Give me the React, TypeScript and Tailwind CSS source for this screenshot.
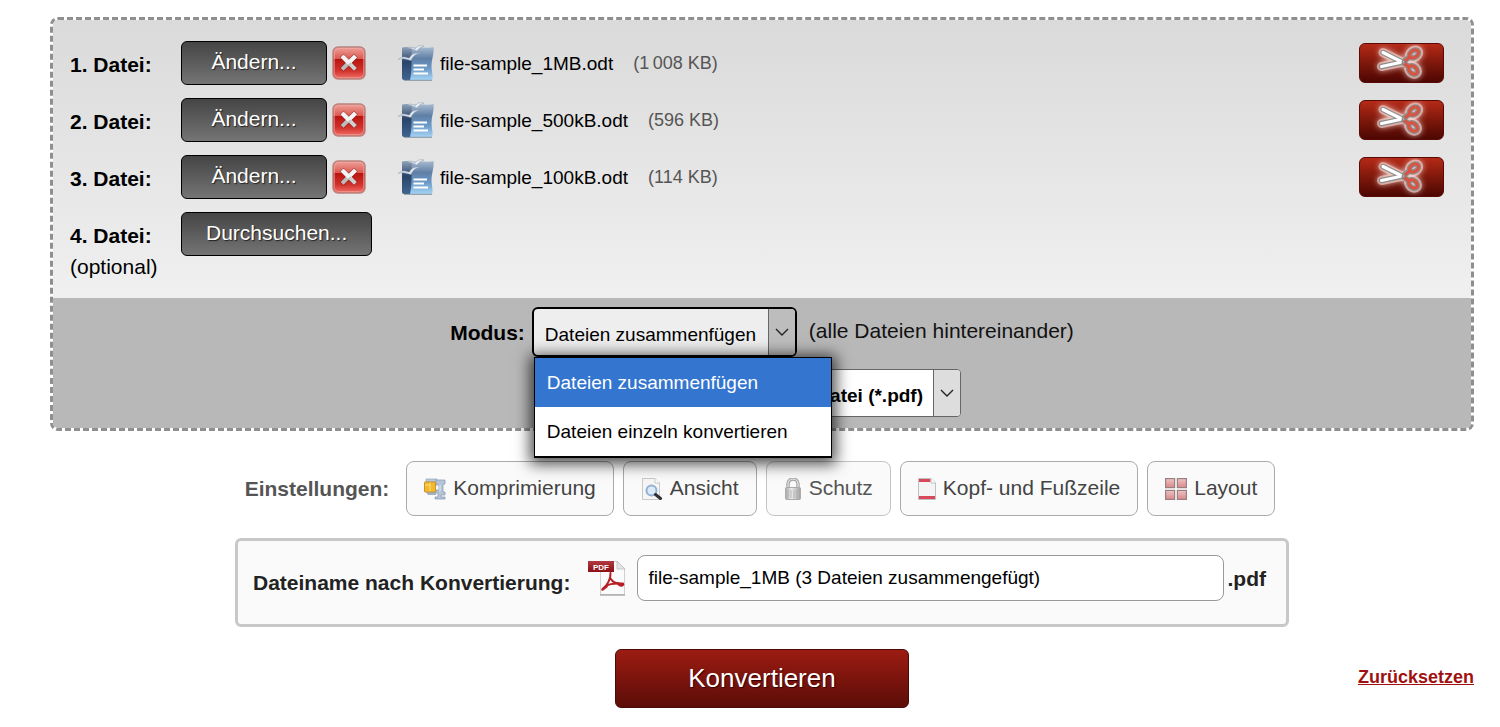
import { useState, type ReactNode } from "react";

const FILES = [
  { name: "file-sample_1MB.odt", size: "(1\u2009008 KB)" },
  { name: "file-sample_500kB.odt", size: "(596 KB)" },
  { name: "file-sample_100kB.odt", size: "(114 KB)" },
];

const MODES = ["Dateien zusammenfügen", "Dateien einzeln konvertieren"];

const SETTINGS = [
  { label: "Komprimierung", icon: <ClampIcon />, muted: false },
  { label: "Ansicht", icon: <PreviewIcon />, muted: false },
  { label: "Schutz", icon: <LockIcon />, muted: true },
  { label: "Kopf- und Fußzeile", icon: <HeaderFooterIcon />, muted: false },
  { label: "Layout", icon: <GridIcon />, muted: false },
];

/** Gradients shared by all icons on the page. */
function IconDefs() {
  return (
    <svg aria-hidden className="absolute h-0 w-0">
      <defs>
        <linearGradient id="page-blue" x1="0" y1="0" x2="0" y2="1">
          <stop offset="0" stopColor="#a9bcd2" />
          <stop offset="0.35" stopColor="#5f7fa5" />
          <stop offset="0.65" stopColor="#6c9ac8" />
          <stop offset="1" stopColor="#a5d4f5" />
        </linearGradient>
        <linearGradient id="cover-blue" x1="0" y1="0" x2="0" y2="1">
          <stop offset="0" stopColor="#8ea2ba" />
          <stop offset="0.45" stopColor="#2a4469" />
          <stop offset="1" stopColor="#3f6490" />
        </linearGradient>
        <linearGradient id="remove-red" x1="0" y1="0" x2="0" y2="1">
          <stop offset="0" stopColor="#eea39c" />
          <stop offset="0.36" stopColor="#dc5a52" />
          <stop offset="0.38" stopColor="#b8140f" />
          <stop offset="0.75" stopColor="#d3332d" />
          <stop offset="1" stopColor="#f0736c" />
        </linearGradient>
        <linearGradient id="tile" x1="0" y1="0" x2="0" y2="1">
          <stop offset="0" stopColor="#ecc4c4" />
          <stop offset="1" stopColor="#d98888" />
        </linearGradient>
        <linearGradient id="banner" x1="0" y1="0" x2="0" y2="1">
          <stop offset="0" stopColor="#b23a40" />
          <stop offset="1" stopColor="#8c0f16" />
        </linearGradient>
        <linearGradient id="steel" x1="0" y1="0" x2="1" y2="0">
          <stop offset="0" stopColor="#a8a8a8" />
          <stop offset="0.4" stopColor="#ececec" />
          <stop offset="1" stopColor="#a0a0a0" />
        </linearGradient>
      </defs>
    </svg>
  );
}

function RemoveIcon() {
  return (
    <svg width="34" height="34" viewBox="0 0 34 34" aria-hidden>
      <rect x="1" y="1" width="32" height="32" rx="5" fill="url(#remove-red)" stroke="#b9827e" strokeWidth="1.4" />
      <rect x="2.5" y="2.5" width="29" height="29" rx="4" fill="none" stroke="#f5a9a3" strokeOpacity="0.55" />
      <path d="M11.5 11.5 22 22M22 11.5 11.5 22" stroke="#7d1a18" strokeWidth="5.4" strokeLinecap="square" opacity="0.5" />
      <path d="M11.5 11.5 22 22" stroke="#d0d0d0" strokeWidth="4" strokeLinecap="square" />
      <path d="M22 11.5 11.5 22" stroke="#bcbcbc" strokeWidth="4" strokeLinecap="square" />
      <path d="M11.5 11.5 16 16M22 11.5 19 14.5" stroke="#f4f4f4" strokeWidth="4" strokeLinecap="square" />
    </svg>
  );
}

function OdtIcon() {
  return (
    <svg width="36" height="36" viewBox="0 0 36 36" aria-hidden className="shrink-0">
      <path d="M4 2.5C8 1.5 12 2 16 3V35H6Q4 35 4 33Z" fill="url(#cover-blue)" />
      <path d="M14 3C21 1 29 4 35.5 2C36.5 8 33.5 14 33.5 21C33.5 27 35.5 31 34 35H12C14.5 25 13 13 14 3Z" fill="url(#page-blue)" />
      <path d="M0 14.5C6 9.5 9 13.5 11.5 13C13 9 17 7.5 21.5 8C17.5 9 15 11 13 15.5C9 14.5 6 12.5 0 14.5Z" fill="#dfe7ee" stroke="#8fa0b2" strokeWidth="0.5" />
      <path d="M9 3C13 1 15 3 17.5 3.5C19 1 22 0 26 1C23 2 21 3 19 6C16 4.5 13 3 9 3Z" fill="#e9eef2" stroke="#8fa0b2" strokeWidth="0.5" />
      <path d="M15.5 20.5H29M15.5 24.5H26M15.5 28.5H30" stroke="#fff" strokeWidth="1.8" />
      <path d="M6 35.3H34" stroke="#6e7d8d" strokeWidth="0.8" />
    </svg>
  );
}

function ScissorsIcon() {
  return (
    <svg width="83" height="38" viewBox="1 0 83 38" aria-hidden>
      <g
        fill="none"
        strokeLinecap="round"
        strokeLinejoin="round"
        className="drop-shadow-[0_0_3px_rgba(255,225,220,0.9)]"
      >
        <g stroke="#f6d5cf" strokeOpacity="0.6" strokeWidth="9">
          <path d="M24 8.5 44 18.500M22.5 22.5 44 18" />
          <ellipse cx="55" cy="10" rx="5" ry="3.5" transform="rotate(-35 55 10)" />
          <ellipse cx="54" cy="26" rx="5" ry="3.5" transform="rotate(42 54 26)" />
        </g>
        <g stroke="#8d8d8d" strokeWidth="5.5">
          <path d="M24 8.5 44 18.500M22.5 22.5 44 18" />
          <path d="M44 18 51 12.5M44 18.5 50 23" />
          <ellipse cx="55" cy="10" rx="5" ry="3.5" transform="rotate(-35 55 10)" />
          <ellipse cx="54" cy="26" rx="5" ry="3.5" transform="rotate(42 54 26)" />
        </g>
        <path d="M24 8.5 42 17.500M22.5 22.5 41 18.5" stroke="#fff" strokeWidth="3.2" />
        <g stroke="#dc5240" strokeWidth="3">
          <path d="M46 17 51 12.500M45 19 50 23" />
          <ellipse cx="55" cy="10" rx="5" ry="3.5" transform="rotate(-35 55 10)" />
          <ellipse cx="54" cy="26" rx="5" ry="3.5" transform="rotate(42 54 26)" />
        </g>
        <circle cx="44.500" cy="18" r="1.5" fill="#aaa" stroke="#888" strokeWidth="1" />
      </g>
    </svg>
  );
}

function ClampIcon() {
  return (
    <svg width="22" height="22" viewBox="0 0 22 22" aria-hidden>
      <path d="M2 1H13V4H2Z" fill="#b9c9d8" stroke="#8fa5bb" strokeWidth="0.7" />
      <path d="M13 2H21V6H19V14H21V17H17V19H21V21H11V19H14V15H12V12H15V7H12V2Z" fill="#b4c6d8" stroke="#8197ad" strokeWidth="0.7" />
      <path d="M16 7V13" stroke="#e6edf3" />
      <path d="M2 14H12V17H4Z" fill="#9db2c6" />
      <rect x="0.5" y="4" width="11" height="10" rx="0.5" fill="#f3b92f" stroke="#c99327" />
      <path d="M6 4.5V13.5M1 7H6" stroke="#ffdf7d" />
    </svg>
  );
}

function PreviewIcon() {
  return (
    <svg width="22" height="22" viewBox="0 0 22 22" aria-hidden>
      <path d="M1.5 0.5H14L18.5 5V21.5H1.5Z" fill="#f6f6f6" stroke="#c9c9c9" />
      <path d="M14 0.5V5H18.5" fill="#fff" stroke="#c9c9c9" />
      <circle cx="10.5" cy="12.5" r="5" fill="#dce9f7" stroke="#92b1d5" strokeWidth="2" />
      <path d="M14.5 16.5 19.5 20.5" stroke="#303030" strokeWidth="3" strokeLinecap="round" />
    </svg>
  );
}

function LockIcon() {
  return (
    <svg width="18" height="22" viewBox="0 0 18 22" aria-hidden>
      <path d="M4 11V6C4 -0.5 14 -0.5 14 6V11" fill="none" stroke="#a2a2a2" strokeWidth="3.4" />
      <path d="M4 11V6C4 -0.5 14 -0.5 14 6V11" fill="none" stroke="#dedede" strokeWidth="1.4" />
      <rect x="1.5" y="9.5" width="15" height="12" rx="1" fill="url(#steel)" stroke="#aaa" />
      <path d="M4 12V20M7 12V20M10 12V20M13 12V20" stroke="#aaa" strokeWidth="0.8" />
    </svg>
  );
}

function HeaderFooterIcon() {
  return (
    <svg width="18" height="22" viewBox="0 0 18 22" aria-hidden>
      <path d="M0.5 0.5H13L17.5 5V21.5H0.5Z" fill="#f4f4f4" stroke="#c0c0c0" />
      <path d="M1 1H12.5V4H1ZM1 18H17V21H1Z" fill="#d9485a" />
      <path d="M13 0.5V5H17.5" fill="#fff" stroke="#c0c0c0" />
    </svg>
  );
}

function GridIcon() {
  return (
    <svg width="22" height="22" viewBox="0 0 22 22" aria-hidden>
      <g fill="url(#tile)" stroke="#9a8080" strokeWidth="1.2">
        <rect x="0.6" y="0.6" width="9" height="9" />
        <rect x="12.4" y="0.6" width="9" height="9" />
        <rect x="0.6" y="12.4" width="9" height="9" />
        <rect x="12.4" y="12.4" width="9" height="9" />
      </g>
    </svg>
  );
}

function PdfIcon() {
  return (
    <svg width="38" height="36" viewBox="0 0 38 36" aria-hidden className="shrink-0">
      <path d="M12.5 1.5H29.5L36.5 8.5V34.5H12.5Z" fill="#fbfbfb" stroke="#d0d0d0" />
      <path d="M12 35H37" stroke="#9c9c9c" strokeWidth="1.2" />
      <path d="M29 1V9H37Z" fill="#e4e4e4" stroke="#bdbdbd" strokeWidth="0.8" />
      <rect x="0" y="1" width="26" height="11" fill="url(#banner)" />
      <text
        x="13"
        y="9.5"
        fill="#fff"
        textAnchor="middle"
        className="font-['Liberation_Sans',Arial,sans-serif] text-[8px] font-bold"
      >
        PDF
      </text>
      <path
        d="M22.5 13C23 19 19 25.5 15 28.5M23 19C25 23 29 24 35 23.5M18 26C22 23.5 26 23.5 30 23.5"
        fill="none"
        stroke="#b81f25"
        strokeWidth="2"
        strokeLinecap="round"
      />
      <path d="M14.5 29.5 18.5 26.500M30 23.5C32 25.5 34 25.5 35 24.5" fill="none" stroke="#b81f25" strokeWidth="2.6" strokeLinecap="round" />
    </svg>
  );
}

function Chevron() {
  return (
    <svg width="14" height="8" viewBox="0 0 14 8" aria-hidden>
      <path d="M1 1 7 7 13 1" fill="none" stroke="#222" strokeWidth="1.4" />
    </svg>
  );
}

function GrayButton({ children }: { children: ReactNode }) {
  return (
    <button
      type="button"
      className="h-11 rounded-md border border-black bg-linear-to-b from-[#454545] to-[#757575] px-6 pb-[2px] text-[21px] leading-7 text-white [text-shadow:1px_1px_1px_#222]"
    >
      {children}
    </button>
  );
}

export default function App() {
  const [mode, setMode] = useState(MODES[0]);
  const [open, setOpen] = useState(true);
  const [fileName, setFileName] = useState("file-sample_1MB (3 Dateien zusammengefügt)");

  return (
    <form
      onSubmit={(e) => e.preventDefault()}
      className="bg-white pt-[17px] pr-[26px] pb-5 pl-[50px] font-['Liberation_Sans',Arial,sans-serif] text-[21px] leading-[31px] text-black"
    >
      <IconDefs />

      <div className="rounded-lg border-3 border-dashed border-[#8f8f8f] bg-clip-padding">
        {/* uploaded files */}
        <div className="flex flex-col gap-[13px] rounded-t-[5px] bg-linear-to-b from-[#dadada] to-[#f0f0f0] pt-[21px] pr-[27px] pb-4 pl-[17px]">
          {FILES.map((file, i) => (
            <div key={file.name} className="flex h-11 items-center">
              <span className="w-[111px] shrink-0 pt-[3px] font-bold">{i + 1}. Datei:</span>
              <div className="w-[146px] [&>button]:w-full">
                <GrayButton>Ändern...</GrayButton>
              </div>
              <button type="button" aria-label={`${file.name} entfernen`} className="ml-[5px]">
                <RemoveIcon />
              </button>
              <div className="ml-8 flex flex-1 items-center gap-[6px] text-[19px]">
                <OdtIcon />
                <span>{file.name}</span>
                <span className="ml-[14px] text-lg text-[#555]">{file.size}</span>
              </div>
              <button
                type="button"
                aria-label={`${file.name} zuschneiden`}
                className="h-10 w-[85px] overflow-hidden rounded-md border border-[#5a0a05] bg-linear-to-b from-[#b52a17] to-[#4d0703]"
              >
                <ScissorsIcon />
              </button>
            </div>
          ))}
          <div className="flex items-start">
            <div className="w-[111px] shrink-0 pt-2">
              <p className="font-bold">4. Datei:</p>
              <p>(optional)</p>
            </div>
            <GrayButton>Durchsuchen...</GrayButton>
          </div>
        </div>

        {/* mode and target format */}
        <div className="flex flex-col items-center gap-3 rounded-b-[5px] bg-[#b8b8b8] pt-[9px] pb-[11px]">
          <div className="flex items-center">
            <label htmlFor="mode" className="font-bold">
              Modus:
            </label>
            <div className="relative ml-[7px] grid">
              <select
                id="mode"
                value={mode}
                onChange={(e) => setMode(e.target.value)}
                onMouseDown={(e) => {
                  e.preventDefault();
                  setOpen(!open);
                }}
                className="col-start-1 row-start-1 h-[50px] w-[265px] appearance-none rounded-md border-2 border-black bg-[#eee] pt-1 pl-[11px] text-[19px] outline-none"
              >
                {MODES.map((m) => (
                  <option key={m}>{m}</option>
                ))}
              </select>
              <span className="pointer-events-none col-start-1 row-start-1 my-[2px] mr-[2px] flex w-[27px] items-center justify-center justify-self-end rounded-r-sm border-l border-[#666] bg-[#bdbdbd]">
                <Chevron />
              </span>
              {open && (
                <ul
                  role="listbox"
                  aria-label="Modus"
                  className="absolute top-full left-[2px] z-10 w-[298px] border border-b-2 border-black bg-white text-[19px] leading-[49px] shadow-[0_2px_14px_4px_rgba(0,0,0,0.7)]"
                >
                  {MODES.map((m) => (
                    <li
                      key={m}
                      role="option"
                      aria-selected={m === mode}
                      onClick={() => {
                        setMode(m);
                        setOpen(false);
                      }}
                      className={m === mode ? "bg-[#3375cf] pl-3 text-white" : "pl-3"}
                    >
                      {m}
                    </li>
                  ))}
                </ul>
              )}
            </div>
            <span className="ml-3 pb-[3px] text-[#111]">(alle Dateien hintereinander)</span>
          </div>

          <div className="grid">
            <select
              aria-label="Zielformat"
              className="col-start-1 row-start-1 h-12 w-[398px] appearance-none rounded-sm border border-[#666] bg-white pt-1 pr-[37px] text-[19px] font-bold [text-align-last:right]"
            >
              <option>PDF-Datei (*.pdf)</option>
            </select>
            <span className="pointer-events-none col-start-1 row-start-1 my-px mr-px flex w-[27px] items-center justify-center justify-self-end rounded-r-[3px] border-l border-[#666] bg-[#ddd]">
              <Chevron />
            </span>
          </div>
        </div>
      </div>

      <div className="mt-[30px] flex items-center justify-center gap-[9px] pr-1">
        <span className="mr-2 font-bold text-[#555]">Einstellungen:</span>
        {SETTINGS.map((s) => (
          <button
            key={s.label}
            type="button"
            className={
              s.muted
                ? "flex h-[55px] items-center gap-[7px] rounded-lg border border-[#c4c4c4] bg-[#fafafa] px-[17px] text-[#555]"
                : "flex h-[55px] items-center gap-[7px] rounded-lg border border-[#aaa] bg-[#fafafa] px-[17px] text-[#444]"
            }
          >
            {s.icon}
            <span className="pb-[3px]">{s.label}</span>
          </button>
        ))}
      </div>

      <div className="mx-auto mt-[22px] flex h-[89px] max-w-[1054px] items-center rounded-md border-3 border-[#c8c8c8] bg-[#fafafa] pr-5 pb-[9px] pl-[15px]">
        <label htmlFor="filename" className="shrink-0 pt-2 font-bold text-[#222]">
          Dateiname nach Konvertierung:
        </label>
        <span className="ml-[18px]">
          <PdfIcon />
        </span>
        <input
          id="filename"
          type="text"
          value={fileName}
          onChange={(e) => setFileName(e.target.value)}
          className="ml-[11px] h-[46px] min-w-0 flex-1 rounded-lg border border-[#999] bg-white px-[10px] text-[19px]"
        />
        <span className="ml-1 font-bold text-[#222]">.pdf</span>
      </div>

      <div className="mt-[22px] grid grid-cols-[1fr_auto_1fr] items-center">
        <button
          type="submit"
          className="col-start-2 h-[59px] w-[294px] rounded-md border border-[#4a0a08] bg-linear-to-b from-[#9c1c12] to-[#5c0d08] text-[26px] text-white [text-shadow:1px_1px_1px_#300]"
        >
          Konvertieren
        </button>
        <a href="#" className="justify-self-end pb-[3px] text-lg leading-6 font-bold text-[#a01010] underline">
          Zurücksetzen
        </a>
      </div>
    </form>
  );
}
